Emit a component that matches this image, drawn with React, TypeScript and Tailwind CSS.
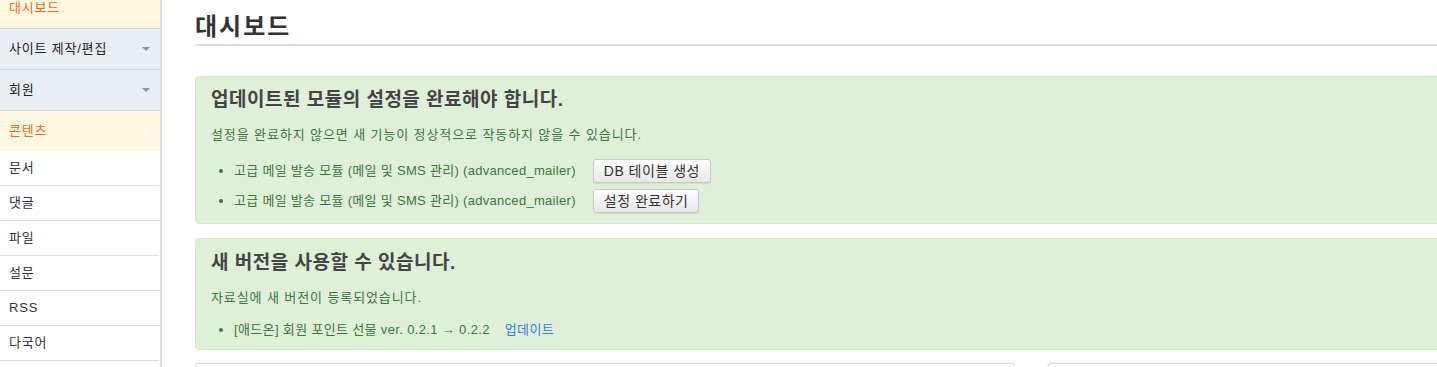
const FONT = "font-['Liberation_Sans','Noto_Sans_CJK_KR',sans-serif]";

const subItems = ['문서', '댓글', '파일', '설문', 'RSS', '다국어'];

function Caret({ up, className }: { up?: boolean; className: string }) {
  return (
    <span
      className={
        up
          ? `w-0 h-0 border-x-[4px] border-x-transparent border-b-[4px] ${className}`
          : `w-0 h-0 border-x-[4px] border-x-transparent border-t-[4px] ${className}`
      }
    />
  );
}

function Sidebar() {
  return (
    <aside className="w-[162px] shrink-0 border-r-2 border-[#dcdcdc] bg-white">
      <div className="-mt-[12px] text-[13px] tracking-[0.8px]">
        <div className="h-[41px] flex items-center pl-[9px] bg-[#fff8e1] text-[#ec6a1e] border-b border-[#d4d9de]">
          대시보드
        </div>
        <div className="h-[41px] flex items-center justify-between pl-[9px] pr-[10px] bg-[#e9eef2] text-[#222] border-b border-[#d4d9de]">
          <span>사이트 제작/편집</span>
          <Caret className="border-t-[#8797a2]" />
        </div>
        <div className="h-[41px] flex items-center justify-between pl-[9px] pr-[10px] bg-[#e9eef2] text-[#222] border-b border-[#d4d9de]">
          <span>회원</span>
          <Caret className="border-t-[#8797a2]" />
        </div>
        <div className="h-[40px] flex items-center justify-between pl-[9px] pr-[10px] bg-[#fff8e1] text-[#ec6a1e]">
          <span>콘텐츠</span>
          <Caret up className="border-b-white" />
        </div>
        {subItems.map((s) => (
          <div
            key={s}
            className="h-[35px] flex items-center pl-[9px] text-[#333] border-b border-[#dedede] mr-[1px]"
          >
            {s}
          </div>
        ))}
        <div className="h-[35px] mr-[1px]" />
      </div>
    </aside>
  );
}

function Button({ children }: { children: React.ReactNode }) {
  return (
    <button className="h-[24px] px-[10px] text-[14px] tracking-[0.5px] leading-[22px] text-[#333] bg-gradient-to-b from-white to-[#e6e6e6] border border-[#c8c8c8] rounded-[3px] shadow-[0_1px_1px_rgba(0,0,0,0.08)]">
      {children}
    </button>
  );
}

export default function App() {
  return (
    <div className={`w-[1437px] h-[367px] overflow-hidden flex bg-white ${FONT}`}>
      <Sidebar />
      <main className="flex-1 pl-[33px] overflow-hidden">
        <div className="w-[1673px]">
          <h1 className="mt-[12px] text-[24px] tracking-[2px] leading-[30px] font-bold text-[#333] pb-[2px] border-b-2 border-[#dddddd]">
            대시보드
          </h1>

          <section className="mt-[30px] bg-[#dff0d8] border border-[#d6e9c6] rounded-[4px] pl-[15px] pt-[11px] pb-[10px] text-[#3c763d]">
            <h2 className="text-[19px] tracking-[0.5px] leading-[24px] font-bold text-[#444]">
              업데이트된 모듈의 설정을 완료해야 합니다.
            </h2>
            <p className="mt-[13px] text-[13px] tracking-[0.9px] leading-[20px]">
              설정을 완료하지 않으면 새 기능이 정상적으로 작동하지 않을 수 있습니다.
            </p>
            <ul className="mt-[14px] pl-[23px] list-disc text-[13px] tracking-[0.3px] flex flex-col gap-[6px]">
              <li className="h-[24px]">
                <div className="flex items-center gap-[17px] h-[24px]">
                  <span>고급 메일 발송 모듈 (메일 및 SMS 관리) (advanced_mailer)</span>
                  <Button>DB 테이블 생성</Button>
                </div>
              </li>
              <li className="h-[24px]">
                <div className="flex items-center gap-[17px] h-[24px]">
                  <span>고급 메일 발송 모듈 (메일 및 SMS 관리) (advanced_mailer)</span>
                  <Button>설정 완료하기</Button>
                </div>
              </li>
            </ul>
          </section>

          <section className="mt-[14px] bg-[#dff0d8] border border-[#d6e9c6] rounded-[4px] pl-[15px] pt-[12px] pb-[9px] text-[#3c763d]">
            <h2 className="text-[19px] tracking-[0.5px] leading-[24px] font-bold text-[#444]">
              새 버전을 사용할 수 있습니다.
            </h2>
            <p className="mt-[13px] text-[13px] tracking-[0.9px] leading-[20px]">
              자료실에 새 버전이 등록되었습니다.
            </p>
            <ul className="mt-[12px] pl-[23px] list-disc text-[13px] tracking-[0.35px] leading-[20px]">
              <li>
                [애드온] 회원 포인트 선물 ver. 0.2.1 → 0.2.2
                <a href="#" className="ml-[15px] text-[#2f83d6]">
                  업데이트
                </a>
              </li>
            </ul>
          </section>

          <div className="mt-[13px] grid grid-cols-2 gap-[33px]">
            <div className="h-[80px] bg-white border border-[#dcdcdc] rounded-t-[3px] shadow-[0_0_3px_rgba(0,0,0,0.1)]" />
            <div className="h-[80px] bg-white border border-[#dcdcdc] rounded-t-[3px] shadow-[0_0_3px_rgba(0,0,0,0.1)]" />
          </div>
        </div>
      </main>
    </div>
  );
}
